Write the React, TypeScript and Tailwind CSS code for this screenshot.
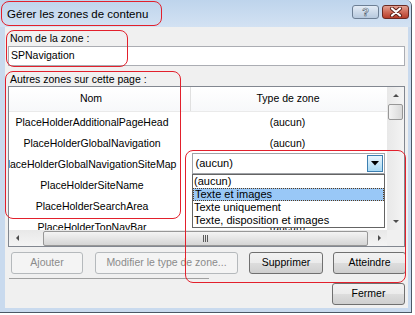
const rows = [
  { name: "PlaceHolderAdditionalPageHead", type: "(aucun)" },
  { name: "PlaceHolderGlobalNavigation", type: "(aucun)" },
  { name: "laceHolderGlobalNavigationSiteMap", combo: true },
  { name: "PlaceHolderSiteName" },
  { name: "PlaceHolderSearchArea" },
  { name: "PlaceHolderTopNavBar", type: "(aucun)" },
];

const options = ["(aucun)", "Texte et images", "Texte uniquement", "Texte, disposition et images"];

function Arrow({ dir }: { dir: "up" | "down" | "left" | "right" }) {
  const pts = {
    up: "1,5 4,2 7,5",
    down: "1,2 4,5 7,2",
    left: "5,1 2,4 5,7",
    right: "3,1 6,4 3,7",
  }[dir];
  return (
    <svg width="8" height="8" viewBox="0 0 8 8">
      <polygon points={pts} fill="#4d4d4d" />
    </svg>
  );
}

function Btn({ label, disabled, className }: { label: string; disabled?: boolean; className: string }) {
  return (
    <div
      className={
        "flex h-[22px] items-center justify-center rounded-[3px] border text-[10.5px] " +
        (disabled
          ? "border-[#b5b9bc] bg-[#f4f4f4] text-[#8b8b8b] "
          : "border-[#707070] bg-[linear-gradient(#f2f2f2,#ebebeb_50%,#dddddd_50%,#cfcfcf)] text-black ") +
        className
      }
    >
      {label}
    </div>
  );
}

export default function App() {
  return (
    <div className="h-[315px] w-[415px] bg-white font-['Liberation_Sans',Arial,sans-serif] text-black">
      <div className="relative flex h-[313px] w-[412px] flex-col rounded-tr-[6px] border-r border-b border-[#4b5866] bg-[#c9daee]">
        {/* Title bar */}
        <div className="flex h-[27px] shrink-0 items-start rounded-tr-[6px] bg-linear-to-b from-[#bed4ec] to-[#d3e2f3]">
          <span className="mt-[6px] ml-[7px] text-[11.5px]">Gérer les zones de contenu</span>
          <div className="ml-auto mt-[5px] mr-[2px] flex gap-[3px]">
            <div className="flex h-[14px] w-[27px] items-center justify-center rounded-[3px] border border-[#6d7f95] bg-linear-to-b from-[#e4ecf6] to-[#b7c9de] text-[11px] font-bold leading-none text-white [-webkit-text-stroke:0.6px_#4a5a70]">
              ?
            </div>
            <div className="flex h-[14px] w-[27px] items-center justify-center rounded-[3px] border border-[#6a2a22] bg-linear-to-b from-[#e3a293] via-[#cf6a57] to-[#b63d2a]">
              <svg width="14" height="10" viewBox="0 0 14 10">
                <path d="M3 1.5 L11 8.5 M11 1.5 L3 8.5" stroke="#5a1f17" strokeWidth="4" strokeLinecap="round" />
                <path d="M3 1.5 L11 8.5 M11 1.5 L3 8.5" stroke="#ffffff" strokeWidth="2.2" strokeLinecap="round" />
              </svg>
            </div>
          </div>
        </div>

        {/* Client area */}
        <div className="ml-[5px] mr-[3px] flex h-[281px] flex-col bg-[#f0f0f0]">
          <div className="mt-[4px] h-[15px] pl-[5px] text-[10.5px] leading-[15px]">Nom de la zone :</div>
          <div className="ml-[3px] flex h-[20px] w-[397px] items-center border border-[#abadb3] bg-white pl-[2px] text-[10.5px]">
            SPNavigation
          </div>
          <div className="mt-[6px] h-[14px] pl-[5px] text-[10.5px] leading-[14px]">Autres zones sur cette page :</div>

          {/* List view */}
          <div className="ml-[3px] flex h-[161px] w-[397px] flex-col border border-[#828790] bg-white text-[10.5px]">
            <div className="flex h-[143px]">
              <div className="relative w-[378px] overflow-hidden">
                <div className="flex h-[25px] border-b border-[#eaeaea] bg-linear-to-b from-white to-[#f7f8fa]">
                  <div className="flex w-[181px] items-center justify-center pr-[17px]">Nom</div>
                  <div className="flex flex-1 items-center justify-center border-l border-[#e0e0e0] pr-[2px]">Type de zone</div>
                </div>
                {rows.map((r) => (
                  <div key={r.name} className="flex h-[21px]">
                    <div className="flex w-[181px] items-center justify-center overflow-hidden whitespace-nowrap pr-[15px]">
                      {r.name}
                    </div>
                    <div className="flex flex-1 items-center justify-center pr-[2px]">
                      {r.combo ? (
                        <div className="ml-[1px] -mt-[2px] flex h-[21px] w-[193px] items-center border border-[#a0a3a8] bg-white text-[11px]">
                          <span className="pl-[3px]">(aucun)</span>
                          <div className="ml-auto mr-[1px] flex h-[17px] w-[16px] items-center justify-center border border-[#3c7fb1] bg-linear-to-b from-[#eaf6fd] to-[#a9daf5]">
                            <svg width="8" height="5" viewBox="0 0 8 5">
                              <polygon points="0,0 8,0 4,4.5" fill="#000" />
                            </svg>
                          </div>
                        </div>
                      ) : (
                        r.type
                      )}
                    </div>
                  </div>
                ))}

                {/* Open dropdown list */}
                <div className="absolute top-[87px] left-[183px] flex w-[193px] flex-col border border-[#646464] bg-white text-[11px]">
                  {options.map((o, i) => (
                    <div
                      key={o}
                      className={
                        "flex h-[13px] items-center pl-[1px] leading-none " +
                        (i === 1 ? "border border-dotted border-[#5b3b1a] bg-[#99c8f7]" : "")
                      }
                    >
                      {o}
                    </div>
                  ))}
                </div>
              </div>

              {/* Vertical scrollbar */}
              <div className="flex w-[17px] flex-col bg-linear-to-r from-[#e8e8e8] to-[#f4f4f4]">
                <div className="flex h-[17px] items-center justify-center">
                  <Arrow dir="up" />
                </div>
                <div className="mx-[1px] h-[16px] rounded-[2px] border border-[#979797] bg-linear-to-r from-[#f4f4f4] to-[#d9d9d9]" />
                <div className="flex-1" />
                <div className="flex h-[17px] items-center justify-center">
                  <Arrow dir="down" />
                </div>
              </div>
            </div>

            {/* Horizontal scrollbar */}
            <div className="flex h-[16px]">
              <div className="flex w-[378px] items-center bg-linear-to-b from-[#e8e8e8] to-[#f4f4f4]">
                <div className="flex w-[17px] items-center justify-center">
                  <Arrow dir="left" />
                </div>
                <div className="ml-[17px] flex h-[15px] w-[325px] items-center justify-center rounded-[2px] border border-[#979797] bg-linear-to-b from-[#f4f4f4] to-[#d5d5d5]">
                  <div className="flex gap-[1px]">
                    <div className="h-[7px] w-[1px] bg-[#5a5a5a]" />
                    <div className="h-[7px] w-[1px] bg-[#5a5a5a]" />
                    <div className="h-[7px] w-[1px] bg-[#5a5a5a]" />
                  </div>
                </div>
                <div className="ml-auto flex w-[17px] items-center justify-center">
                  <Arrow dir="right" />
                </div>
              </div>
              <div className="flex-1 bg-[#f0f0f0]" />
            </div>
          </div>

          {/* Action buttons */}
          <div className="mt-[5px] flex">
            <Btn label="Ajouter" disabled className="ml-[6px] w-[72px]" />
            <Btn label="Modifier le type de zone..." disabled className="ml-[12px] w-[143px]" />
            <Btn label="Supprimer" className="ml-[11px] w-[74px]" />
            <Btn label="Atteindre" className="ml-[10px] w-[73px]" />
          </div>
          <div className="mt-[4px] ml-[4px] h-[1px] w-[200px] bg-[#a0a0a0]" />
          <div className="mt-[4px] flex">
            <Btn label="Fermer" className="ml-[327px] w-[73px]" />
          </div>
        </div>

        {/* Red annotations */}
        <div className="absolute top-[1px] left-[1px] h-[25px] w-[161px] rounded-[8px] border border-[#e2202c]" />
        <div className="absolute top-[30px] left-[6px] h-[37px] w-[122px] rounded-[8px] border border-[#e2202c]" />
        <div className="absolute top-[71px] left-[5px] h-[148px] w-[176px] rounded-[8px] border border-[#e2202c]" />
        <div className="absolute top-[150px] left-[185px] h-[133px] w-[221px] rounded-[8px] border border-[#e2202c]" />
      </div>
    </div>
  );
}
